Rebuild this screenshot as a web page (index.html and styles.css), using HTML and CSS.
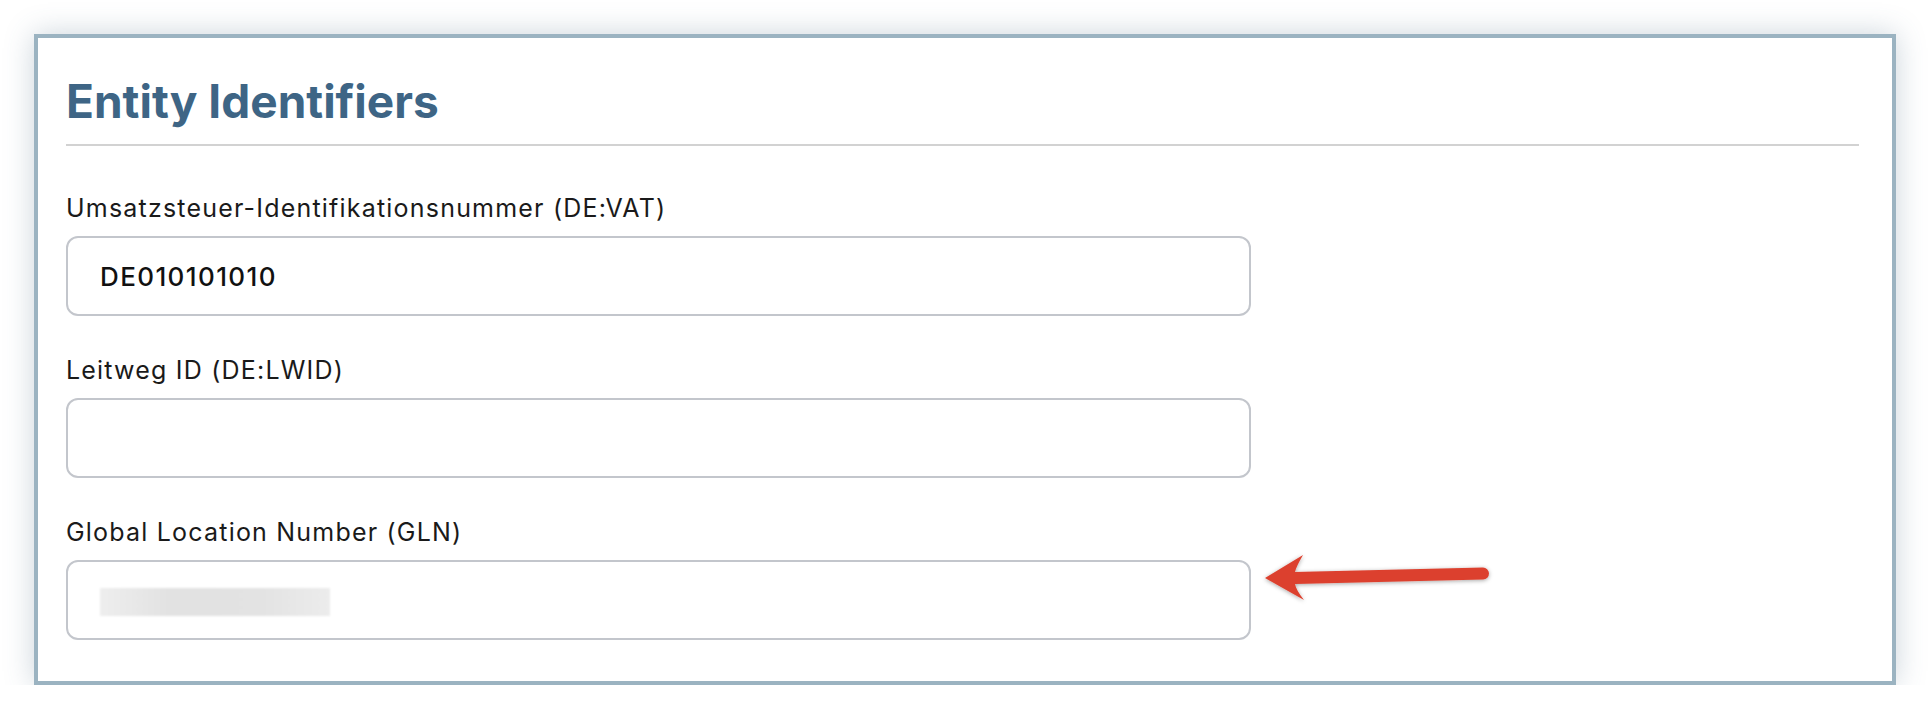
FILE: index.html
```html
<!DOCTYPE html>
<html lang="de">
<head>
    <meta charset="UTF-8">
    <meta name="viewport" content="width=device-width, initial-scale=1.0">
    <title>Entity Identifiers</title>
    <link rel="stylesheet" href="styles.css">
</head>
<body>
    <section class="panel">
        <h2 class="panel-title">Entity Identifiers</h2>

        <div class="fields">
            <div class="field">
                <label class="field-label">Umsatzsteuer-Identifikationsnummer (DE:VAT)</label>
                <div class="field-box"><span class="field-value">DE010101010</span></div>
            </div>

            <div class="field">
                <label class="field-label">Leitweg ID (DE:LWID)</label>
                <div class="field-box"></div>
            </div>

            <div class="field">
                <label class="field-label">Global Location Number (GLN)</label>
                <div class="field-box">
                    <span class="redacted"></span>
                </div>
            </div>
        </div>
    </section>

    <!-- -- annotation arrow pointing at the GLN box -- -->
    <svg class="callout-arrow" width="245" height="66" viewBox="0 0 245 66">
        <defs>
            <filter id="arrow-shadow" x="-10%" y="-40%" width="120%" height="180%">
                <feDropShadow dx="0" dy="1" stdDeviation="2" flood-color="#000" flood-opacity="0.35"/>
            </filter>
        </defs>
        <g filter="url(#arrow-shadow)" fill="#dc412f" stroke="#dc412f">
            <line x1="40" y1="33" x2="228" y2="28.5" stroke-width="12" stroke-linecap="round"/>
            <path d="M10 33 L48 10 Q41 22 40 27 L40 39 Q41 45 49 55 Z" stroke="none"/>
        </g>
    </svg>
</body>
</html>
```

FILE: styles.css
```css
body {
    margin: 0;
    background-color: #ffffff;
    font-family: "Inter", "Noto Sans", sans-serif;
    color: #1d1d1f;
}

.panel {
    box-sizing: border-box;
    width: 1862px;
    margin: 34px 0 0 34px;
    padding: 36px 33px 41px 28px;
    background-color: #ffffff;
    border: 4px solid #9bb3c1;
    box-shadow: 0 0 28px rgba(70, 100, 125, 0.28);
}

.panel-title {
    margin: 0;
    padding-bottom: 15px;
    border-bottom: 2px solid #d2d2d2;
    font-size: 46px;
    font-weight: 700;
    line-height: 55px;
    color: #3e6585;
}

.fields {
    display: flex;
    flex-direction: column;
    gap: 36px;
    margin-top: 44px;
}

.field {
    display: flex;
    flex-direction: column;
    gap: 10px;
}

.field-label {
    font-size: 25px;
    letter-spacing: 1.2px;
    line-height: 36px;
    color: #1a1a1a;
}

.field-box {
    box-sizing: border-box;
    display: flex;
    align-items: center;
    width: 1185px;
    height: 80px;
    padding: 0 32px;
    border: 2px solid #c3c6cc;
    border-radius: 12px;
}

.field-value {
    font-size: 26px;
    font-weight: 500;
    letter-spacing: 1.4px;
    color: #111111;
}

.redacted {
    display: block;
    width: 230px;
    height: 28px;
    margin-top: 4px;
    background: linear-gradient(90deg, #eeeeee, #e2e2e2 30%, #e3e3e3 70%, #ececec);
    filter: blur(1px);
}

.callout-arrow {
    position: absolute;
    left: 1255px;
    top: 545px;
}
```
